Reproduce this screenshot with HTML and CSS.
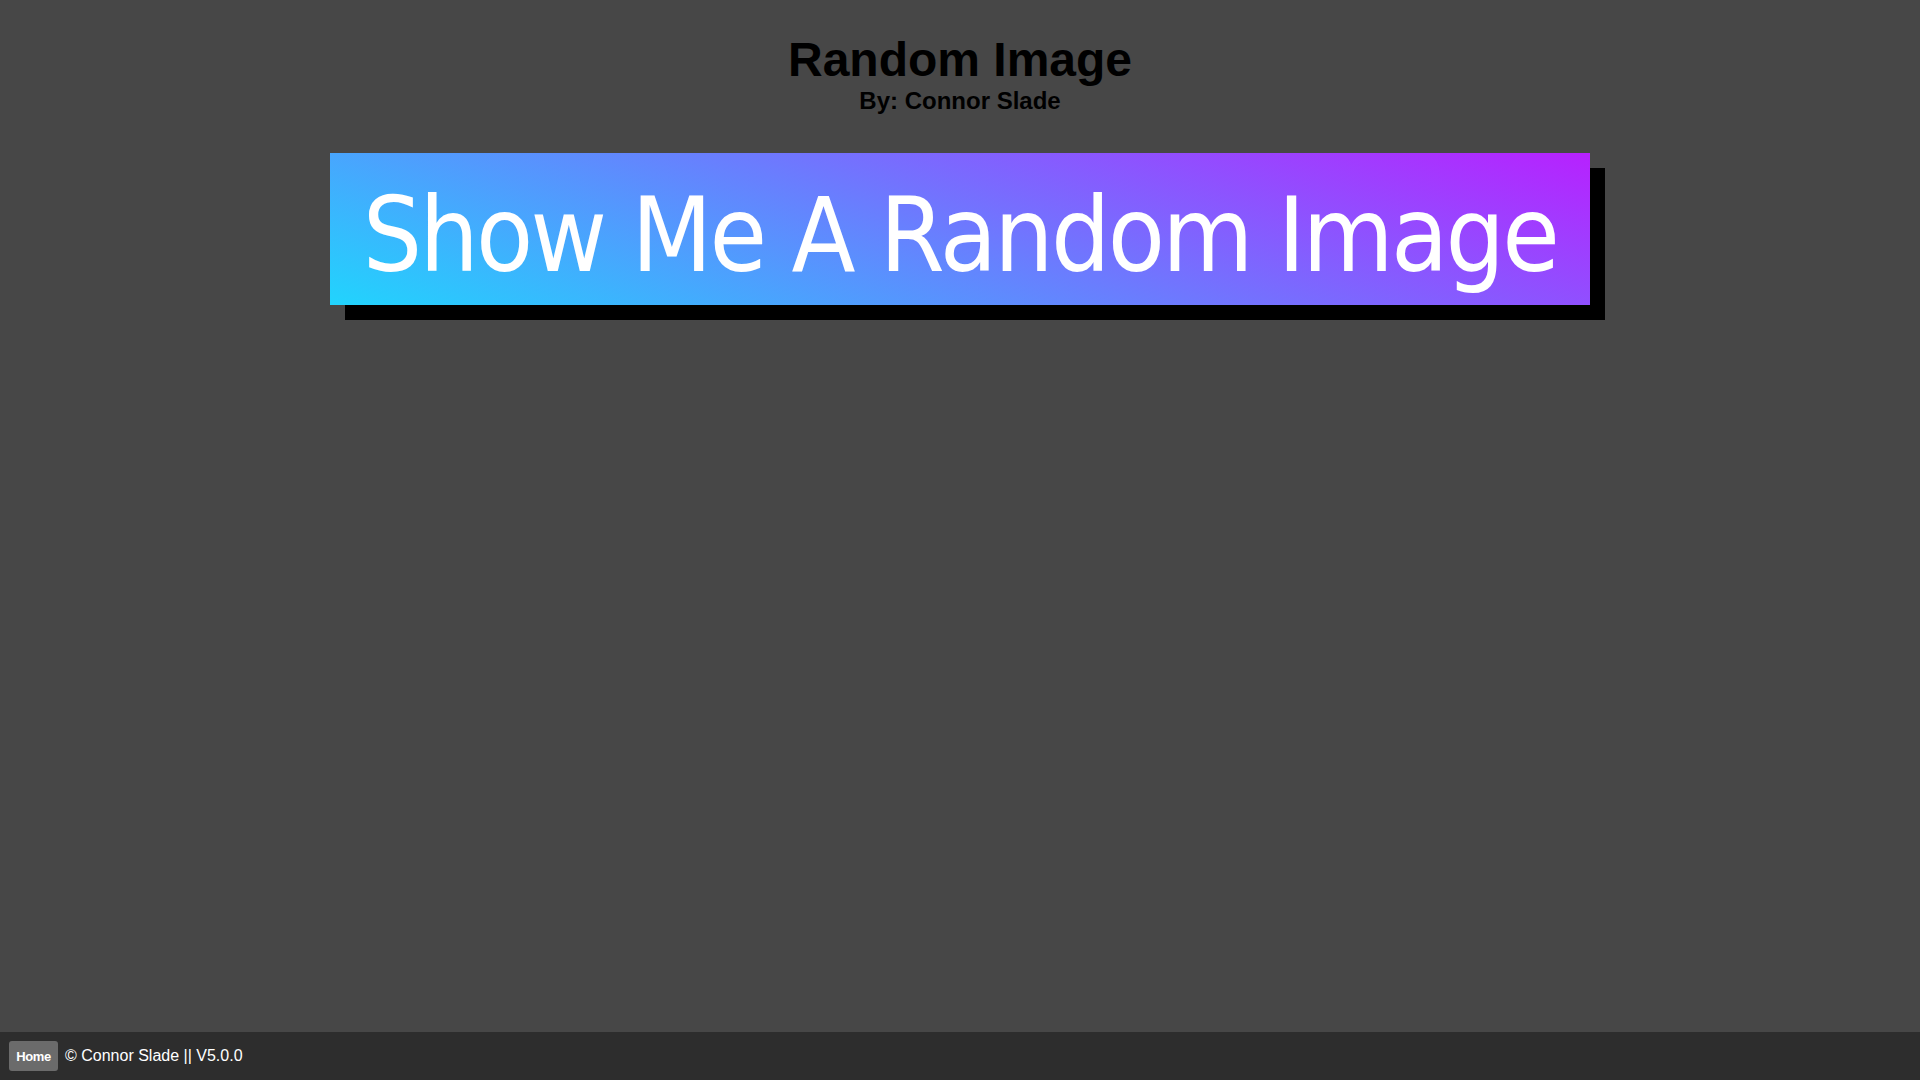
FILE: index.html
```html
<!DOCTYPE html>
<html>
<head>
<meta charset="utf-8">
<title>Random Image</title>
<link rel="stylesheet" href="styles.css">
</head>
<body>
<main class="page">
  <header class="heading">
    <h1 class="title">Random Image</h1>
    <p class="byline">By: Connor Slade</p>
  </header>
  <div class="action">
    <button class="random-btn">Show Me A Random Image</button>
  </div>
</main>
<footer class="footer">
  <a class="home-btn" href="#">Home</a>
  <span class="copy">© Connor Slade || V5.0.0</span>
</footer>
</body>
</html>
```
FILE: styles.css
```css
html, body {
  margin: 0;
  padding: 0;
  height: 100%;
}
body {
  background: #474747;
  font-family: "Liberation Sans", Arial, sans-serif;
  display: flex;
  flex-direction: column;
  min-height: 100vh;
}
.page {
  flex: 1;
  display: flex;
  flex-direction: column;
  align-items: center;
}
.heading {
  text-align: center;
  margin-top: 32px;
}
.title {
  margin: 0;
  font-size: 48px;
  line-height: 56px;
  font-weight: bold;
  color: #000;
}
.byline {
  margin: 1px 0 0 0;
  font-size: 24px;
  line-height: 24px;
  font-weight: bold;
  color: #000;
}
.action {
  margin-top: 40px;
}
.random-btn {
  display: block;
  width: 1260px;
  height: 152px;
  border: none;
  padding: 12px 0 0 0;
  background: linear-gradient(19deg, #21D4FD 0%, #B721FF 100%);
  color: #fff;
  font-family: "DejaVu Sans Condensed", "DejaVu Sans", sans-serif;
  font-stretch: condensed;
  font-size: 104px;
  letter-spacing: -2.7px;
  white-space: nowrap;
  box-shadow: 15px 15px 0 #000;
  cursor: pointer;
}
.footer {
  height: 48px;
  background: #2d2d2d;
  display: flex;
  align-items: center;
  padding-left: 9px;
  gap: 7px;
}
.home-btn {
  display: inline-flex;
  align-items: center;
  justify-content: center;
  width: 49px;
  height: 30px;
  background: #6b6b6b;
  border-radius: 3px;
  color: #fff;
  font-size: 13px;
  font-weight: bold;
  text-decoration: none;
  letter-spacing: -0.4px;
}
.copy {
  color: #fff;
  font-size: 16px;
}
```
